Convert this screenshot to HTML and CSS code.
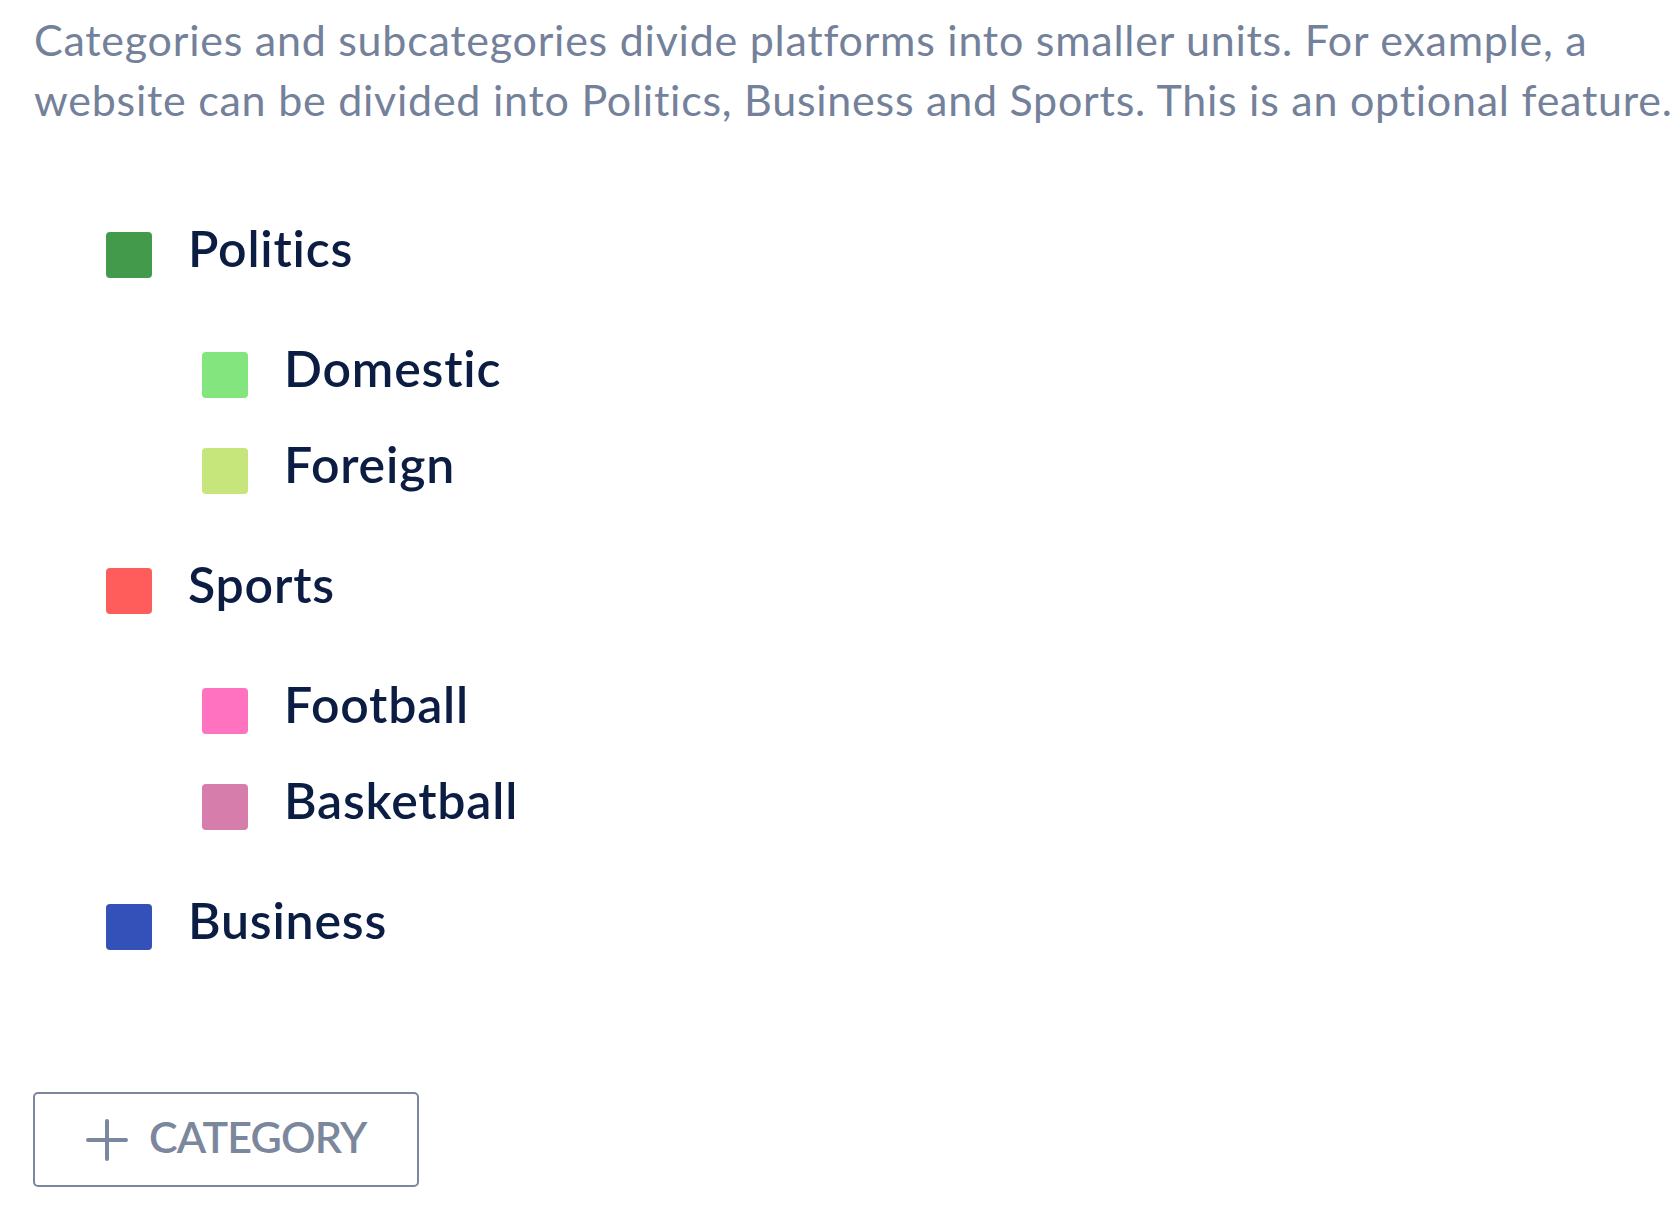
FILE: index.html
```html
<!DOCTYPE html>
<html>
<head>
  <title>Categories</title>
  <link rel="stylesheet" href="styles.css">
</head>
<body>

  <div class="page">
    <p class="intro">Categories and subcategories divide platforms into smaller units. For example, a website can be divided into Politics, Business and Sports. This is an optional feature.</p>

    <ul class="categories">
      <li>
        <div class="row"><span class="swatch politics"></span><span class="label">Politics</span></div>
        <ul class="subcategories">
          <li><div class="row"><span class="swatch domestic"></span><span class="label">Domestic</span></div></li>
          <li><div class="row"><span class="swatch foreign"></span><span class="label">Foreign</span></div></li>
        </ul>
      </li>
      <li>
        <div class="row"><span class="swatch sports"></span><span class="label">Sports</span></div>
        <ul class="subcategories">
          <li><div class="row"><span class="swatch football"></span><span class="label">Football</span></div></li>
          <li><div class="row"><span class="swatch basketball"></span><span class="label">Basketball</span></div></li>
        </ul>
      </li>
      <li>
        <div class="row"><span class="swatch business"></span><span class="label">Business</span></div>
      </li>
    </ul>

    <button class="add-button">
      <svg class="plus" viewBox="0 0 42 42" width="42" height="42">
        <path d="M21 2 V40 M2 21 H40" stroke="currentColor" stroke-width="4" stroke-linecap="round" fill="none"/>
      </svg>
      <span>CATEGORY</span>
    </button>
  </div>

</body>
</html>
```

FILE: styles.css
```css
body {
  margin: 0;
  background-color: #fff;
  font-family: Lato, "Open Sans", sans-serif;
  font-variant-ligatures: none;
}

.page {
  padding: 10px 4px 0 34px;
}

.intro {
  margin: 0;
  font-size: 43px;
  line-height: 60px;
  letter-spacing: 0.75px;
  color: #74819a;
}

.categories {
  list-style: none;
  margin: 70px 0 0 0;
  padding: 0 0 0 72px;
}

.subcategories {
  list-style: none;
  margin: 24px 0;
  padding: 0 0 0 96px;
}

.row {
  display: flex;
  align-items: center;
  gap: 36px;
  height: 96px;
}

.swatch {
  width: 46px;
  height: 46px;
  margin-top: 14px;
  border-radius: 4px;
  flex-shrink: 0;
}

.label {
  font-size: 50px;
  font-weight: 600;
  letter-spacing: 0.8px;
  color: #0b1d43;
}

.politics { background-color: #449a4b; }
.domestic { background-color: #82e57e; }
.foreign { background-color: #c6e57a; }
.sports { background-color: #ff5c5c; }
.football { background-color: #ff72bf; }
.basketball { background-color: #d67dac; }
.business { background-color: #3451b9; }

.add-button {
  display: flex;
  align-items: center;
  gap: 21px;
  width: 386px;
  height: 95px;
  margin: 124px 0 0 -1px;
  padding: 0 0 0 51px;
  background-color: #fff;
  border: 2px solid #7b879c;
  border-radius: 5px;
  color: #7b879c;
  font-family: Lato, "Open Sans", sans-serif;
  font-size: 43px;
  font-weight: 600;
  letter-spacing: -0.8px;
  cursor: pointer;
}

.add-button span {
  margin-top: -6px;
}
```
